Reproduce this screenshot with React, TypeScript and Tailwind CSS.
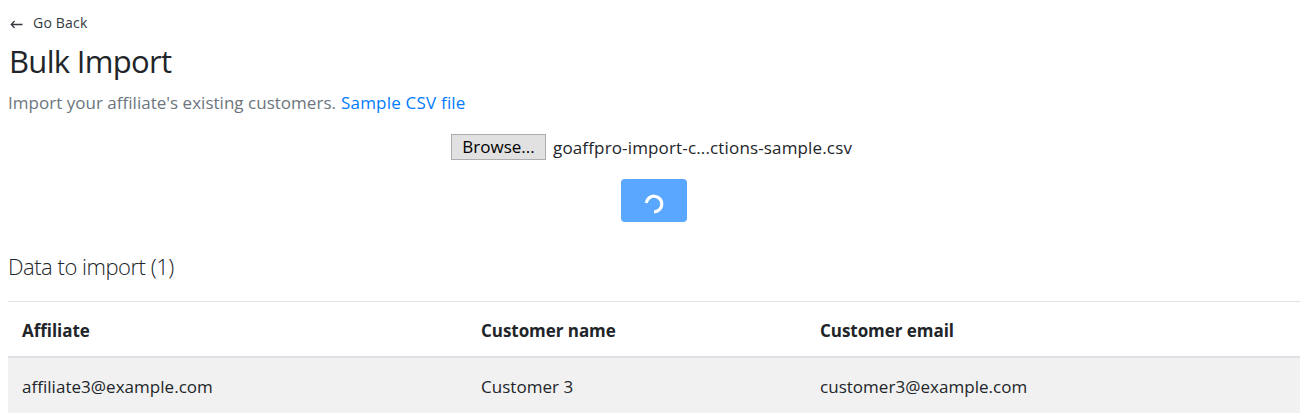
const columns = ["Affiliate", "Customer name", "Customer email"];
const rows = [["affiliate3@example.com", "Customer 3", "customer3@example.com"]];

function Spinner() {
  return (
    <svg className="mt-[7px] size-5" viewBox="0 0 20 20" fill="none" stroke="#fff" strokeWidth="3.2">
      <path d="M2.3 8.9A7.8 7.8 0 1 1 10 17.8" />
    </svg>
  );
}

export default function App() {
  return (
    <main className="h-[420px] overflow-hidden bg-white pr-[7px] pl-2 font-['Open_Sans','Noto_Sans',sans-serif] text-[17px] whitespace-nowrap text-[#212529]">
      <a className="flex h-[45px] items-center text-[14px] text-[#343a40]">
        <svg className="mt-0.5 mr-2.5 ml-0.5 h-3 w-[13px]" viewBox="0 0 13 12" fill="none" stroke="#343a40" strokeWidth="1.3">
          <path d="M12.5 6.5H1.5M4.5 3L1.3 6.5L4.5 10" />
        </svg>
        <span className="tracking-[0.2px]">Go Back</span>
      </a>
      <h1 className="h-[43px] pl-px text-[31px] leading-[32px] tracking-[-0.68px]">Bulk Import</h1>
      <p className="flex h-[30px] items-center gap-[5px] text-[#6c757d]">
        <span className="tracking-[0.02px]">Import your affiliate's existing customers.</span>
        <a className="tracking-[0.2px] text-[#007bff]">Sample CSV file</a>
      </p>
      <div className="mt-4 flex h-[26px] items-center pl-[443px]">
        <button className="flex h-[26px] w-[95px] items-center justify-center border border-[#adadad] bg-[#e1e1e1] text-black">
          <span>Browse...</span>
        </button>
        <span className="mt-px ml-[7px] tracking-[0.15px]">goaffpro-import-c...ctions-sample.csv</span>
      </div>
      <button className="mt-[19px] ml-[613px] flex h-[43px] w-[66px] items-center justify-center rounded-[4px] bg-[#59a7ff]">
        <Spinner />
      </button>
      <h2 className="mt-[29px] h-[50px] text-[22px] leading-[30px] font-light tracking-[-0.48px]">Data to import (1)</h2>
      <table className="w-full table-fixed border-collapse text-left">
        <colgroup>
          <col className="w-[459px]" />
          <col className="w-[339px]" />
          <col />
        </colgroup>
        <thead>
          <tr className="h-[55px] border-t border-b-2 border-[#dee2e6]">
            {columns.map((c) => (
              <th key={c} className="px-3.5 pt-[3px] pb-0 font-bold tracking-[-0.05px]"><span>{c}</span></th>
            ))}
          </tr>
        </thead>
        <tbody>
          {rows.map((r) => (
            <tr key={r[0]} className="h-14 bg-[#f1f1f1]">
              {r.map((v) => (
                <td key={v} className="px-3.5 pt-[3px] pb-0 tracking-[0.03px]"><span>{v}</span></td>
              ))}
            </tr>
          ))}
        </tbody>
      </table>
    </main>
  );
}
